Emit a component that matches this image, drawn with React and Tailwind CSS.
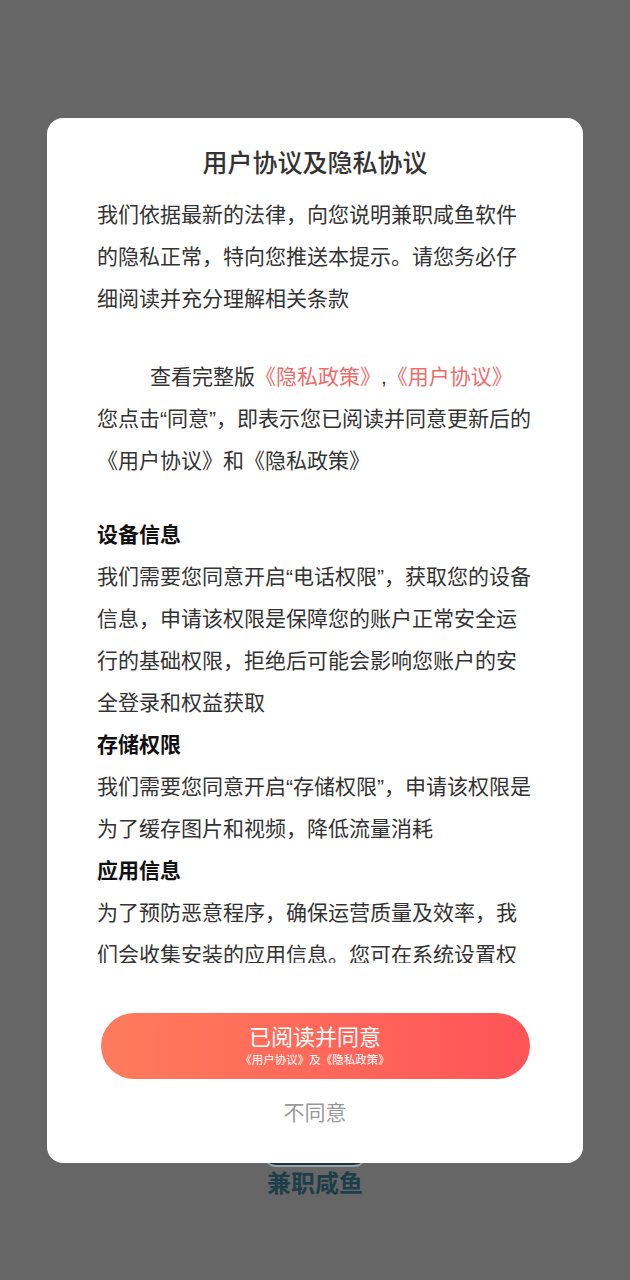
import React from 'react';

const font = { fontFamily: '"Liberation Sans", "Noto Sans CJK SC", sans-serif' };

const sections = [
  {
    title: '设备信息',
    body: '我们需要您同意开启“电话权限”，获取您的设备信息，申请该权限是保障您的账户正常安全运行的基础权限，拒绝后可能会影响您账户的安全登录和权益获取',
  },
  {
    title: '存储权限',
    body: '我们需要您同意开启“存储权限”，申请该权限是为了缓存图片和视频，降低流量消耗',
  },
  {
    title: '应用信息',
    body: '为了预防恶意程序，确保运营质量及效率，我们会收集安装的应用信息。您可在系统设置权限中关闭，关闭后将无法使用相关功能',
  },
];

export default function App() {
  return (
    <div className="relative h-[1280px] w-[630px] overflow-hidden bg-[#666666]" style={font}>
      {/* page behind the dialog */}
      <div className="flex flex-col items-center pt-[1100px]">
        <div className="h-[67px] w-[102px] rounded-[12px] border-b-2 border-[#8fa9b4] bg-[#263238]" />
        <div className="mt-[2px] text-[24px] font-bold leading-[30px] text-[#1d3d4a]">兼职咸鱼</div>
      </div>

      {/* dialog */}
      <div className="absolute left-[47px] top-[118px] w-[536px] rounded-[16px] bg-white px-[50px] pb-[30px] pt-[24px]">
        <h1 className="text-center text-[25px] font-medium leading-[42px] text-[#333333]">用户协议及隐私协议</h1>
        <div className="mt-[10px] h-[769px] overflow-hidden text-[21px] leading-[42px] text-[#333333]">
          <p>我们依据最新的法律，向您说明兼职咸鱼软件的隐私正常，特向您推送本提示。请您务必仔细阅读并充分理解相关条款</p>
          <p className="mt-[36px] indent-[53px]">
            查看完整版<span className="text-[#f06b6b]">《隐私政策》</span>,<span className="text-[#f06b6b]">《用户协议》</span>
            您点击“同意”，即表示您已阅读并同意更新后的《用户协议》和《隐私政策》
          </p>
          <div className="mt-[32px]">
            {sections.map((s) => (
              <div key={s.title}>
                <h2 className="font-bold text-[#111111]">{s.title}</h2>
                <p>{s.body}</p>
              </div>
            ))}
          </div>
        </div>
        <div className="mt-[50px] flex flex-col items-center">
          <button className="flex h-[66px] w-[429px] flex-col items-center justify-center rounded-full bg-gradient-to-r from-[#ff7b5c] to-[#ff5358] text-white">
            <span className="text-[22px] leading-[28px]">已阅读并同意</span>
            <span className="text-[11.5px] leading-[16px]">《用户协议》及《隐私政策》</span>
          </button>
          <button className="mt-[14px] text-[21px] leading-[40px] text-[#999999]">不同意</button>
        </div>
      </div>
    </div>
  );
}
